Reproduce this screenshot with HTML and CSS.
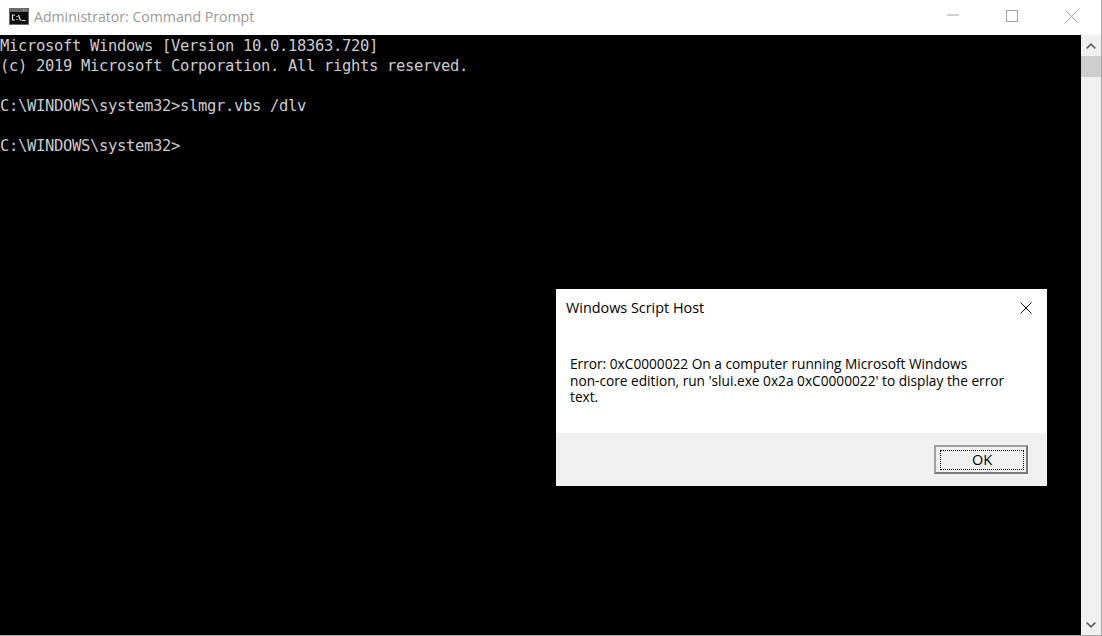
FILE: index.html
```html
<!DOCTYPE html>
<html lang="en">
<head>
<meta charset="utf-8">
<title>Administrator: Command Prompt</title>
<link rel="stylesheet" href="styles.css">
</head>
<body>
<div class="window">
  <header class="titlebar">
    <svg class="app-icon" width="20" height="17" viewBox="0 0 20 17">
      <rect width="20" height="17" fill="#6a6a6a"/>
      <rect x="1" y="4" width="18" height="12" fill="#0a0a0a"/>
      <path d="M14 2H18" stroke="#bbb" stroke-dasharray="1 1"/>
      <path d="M6 7H3.5V12H6M8 8V9M8 11V12M9.5 7L11.5 12.5M12.5 12.5H16.5" stroke="#e4e4e4" fill="none" stroke-width="1.2"/>
    </svg>
    <span class="title">Administrator: Command Prompt</span>
    <div class="controls">
      <span class="control"><svg class="min-icon" width="12" height="2" viewBox="0 0 12 2"><path d="M0 1H12" stroke="#a0a0a0"/></svg></span>
      <span class="control"><svg class="max-icon" width="12" height="12" viewBox="0 0 12 12"><rect x=".5" y=".5" width="11" height="11" fill="none" stroke="#a0a0a0"/></svg></span>
      <span class="control"><svg width="13" height="13" viewBox="0 0 13 13"><path d="M.5.5L12.5 12.5M12.5.5L.5 12.5" stroke="#a0a0a0"/></svg></span>
    </div>
  </header>
  <main class="client">
    <pre class="console">Microsoft Windows [Version 10.0.18363.720]
(c) 2019 Microsoft Corporation. All rights reserved.

C:\WINDOWS\system32&gt;slmgr.vbs /dlv

C:\WINDOWS\system32&gt;</pre>
    <div class="scrollbar">
      <svg class="arrow" width="10" height="6" viewBox="0 0 10 6"><path d="M.7 5.3L5 1.2L9.3 5.3" fill="none" stroke="#606060" stroke-width="1.7"/></svg>
      <div class="thumb"></div>
      <div class="track"></div>
      <svg class="arrow" width="10" height="6" viewBox="0 0 10 6"><path d="M.7 .7L5 4.8L9.3 .7" fill="none" stroke="#606060" stroke-width="1.7"/></svg>
    </div>
  </main>
</div>
<section class="dialog">
  <div class="dialog-head">
    <span class="dialog-title">Windows Script Host</span>
    <svg width="12" height="12" viewBox="0 0 12 12"><path d="M.5.5L11.5 11.5M11.5.5L.5 11.5" stroke="#111" fill="none"/></svg>
  </div>
  <p class="message">Error: 0xC0000022 On a computer running Microsoft Windows<br>non-core edition, run 'slui.exe 0x2a 0xC0000022' to display the error<br>text.</p>
  <div class="dialog-foot"><button class="ok"><span class="ok-label">OK</span></button></div>
</section>
</body>
</html>
```
FILE: styles.css
```css
html, body { margin: 0; padding: 0; height: 100%; overflow: hidden; background: #fff; }
.window { width: 1102px; height: 636px; box-sizing: border-box; display: flex; flex-direction: column; border-right: 1px solid #a8a8a8; border-bottom: 1px solid #a8a8a8; }
.titlebar { height: 35px; flex: none; display: flex; align-items: flex-start; background: #fff; padding-left: 9px; }
.app-icon { flex: none; margin: 8px 5px 0 0; }
.title { font: 14.12px/20px "Open Sans", "Noto Sans", sans-serif; color: #999; margin-top: 7px; }
.controls { margin-left: auto; display: flex; }
.control { width: 59px; height: 32px; display: flex; align-items: center; justify-content: center; }
.min-icon { margin-right: 2px; margin-top: -2px; }
.max-icon { margin-right: 2px; }
.client { flex: 1; display: flex; min-height: 0; }
.console { flex: 1; margin: 0; background: #000; color: #cccccc; font: 15.5px/20px "DejaVu Sans Mono", monospace; padding-top: 1px; overflow: hidden; letter-spacing: -.33px; }
.scrollbar { width: 20px; flex: none; background: #f0f0f0; display: flex; flex-direction: column; align-items: center; }
.arrow { margin: 8px 0 7px; flex: none; }
.thumb { width: 20px; height: 21px; background: #cdcdcd; }
.track { flex: 1; }
.dialog { position: absolute; left: 556px; top: 289px; width: 491px; height: 197px; background: #fff; display: flex; flex-direction: column; }
.dialog-head { height: 38px; flex: none; display: flex; justify-content: space-between; align-items: center; padding: 0 15px 0 10px; }
.dialog-title { font: 14.4px/20px "Open Sans", "Noto Sans", sans-serif; color: #000; }
.message { margin: 29px 0 0; padding: 0 20px 0 14px; flex: 1; font: 13.7px/16.5px "Open Sans", "Noto Sans", sans-serif; color: #000; }
.dialog-foot { height: 53px; flex: none; background: #f0f0f0; display: flex; justify-content: flex-end; align-items: center; padding-right: 19px; }
.ok { width: 94px; height: 29px; box-sizing: border-box; padding: 3px 2px 2px 4px; border: 2px solid #7a7a7a; border-top-color: #a0a0a0; border-left-color: #a0a0a0; background: #f0f0f0; display: flex; }
.ok-label { flex: 1; border: 1px dotted #000; font: 500 14.5px/18px "Open Sans", "Noto Sans", sans-serif; color: #000; text-align: center; }
```
